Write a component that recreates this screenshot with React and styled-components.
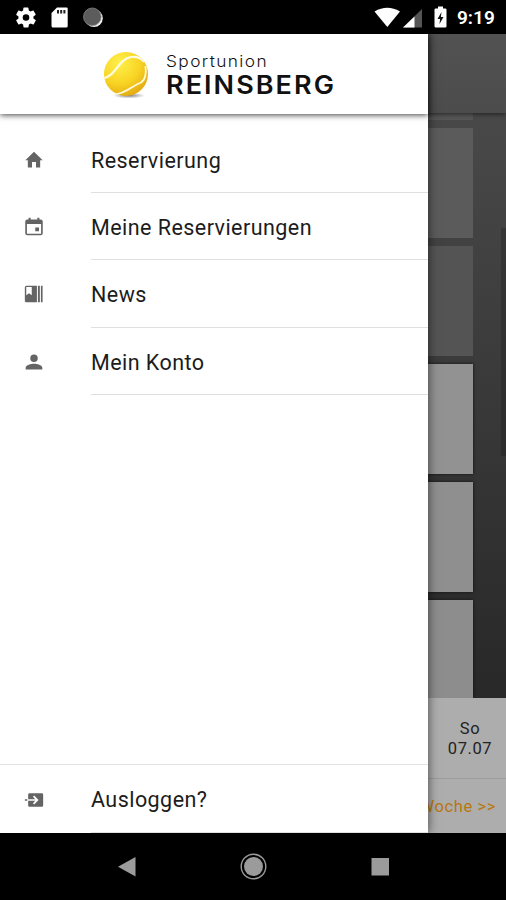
import React from 'react';
import styled, { createGlobalStyle } from 'styled-components';

const menu = [
  { label: 'Reservierung', icon: 'home' },
  { label: 'Meine Reservierungen', icon: 'event' },
  { label: 'News', icon: 'news' },
  { label: 'Mein Konto', icon: 'person' },
];

const icons = {
  home: 'M9.600 21v-6.500h4.800V21h5v-8.600h3L12 2 1.600 12.400h3V21z',
  event: 'M20 3h-1.500V1h-2.500v2H8V1H5.500v2H4a2.500 2.500 0 0 0-2.500 2.500v14A2.500 2.500 0 0 0 4 22h16a2.500 2.500 0 0 0 2.500-2.500v-14A2.500 2.500 0 0 0 20 3zm.5 17h-17V8.500h17zM13.500 12.500H18V17h-4.500z',
  news: 'M3 2h12.5v20H3a2 2 0 0 1-2-2V4a2 2 0 0 1 2-2zm-.3 1.500v10L6 11l3.300 2.500v-10zM16.700 2h2.300v20h-2.300zM20.300 2h2v20h-2z',
  person: 'M12 12a4.500 4.500 0 1 0 0-9 4.500 4.500 0 0 0 0 9zm0 2c-3.300 0-10 1.500-10 4.800V21h20v-2.200c0-3.300-6.700-4.800-10-4.800z',
  exit: 'M6.500 4h15a1.500 1.500 0 0 1 1.500 1.500v13a1.500 1.500 0 0 1-1.500 1.500h-15a1.500 1.500 0 0 1-1.500-1.500V13h8.500l-2.800 2.800 1.500 1.500L17.500 12l-5.300-5.300-1.500 1.500 2.800 2.800H5V5.500A1.500 1.500 0 0 1 6.500 4zM1 11.200h3v1.600H1z',
};

const MenuIcon = ({ name }) => (
  <Icon_svg viewBox="0 0 24 24">
    <path d={icons[name]} fillRule="evenodd" />
  </Icon_svg>
);

const StatusBar = () => (
  <Status_header>
    <svg width="110" height="34" viewBox="0 0 110 34">
      <g transform="translate(14 5.500)">
        <path
          fill="#fff"
          fillRule="evenodd"
          d="M19.400 13a7.500 7.500 0 0 0 0-2l2.100-1.600a.5.5 0 0 0 .1-.6l-2-3.500a.5.5 0 0 0-.6-.2l-2.500 1a7.300 7.300 0 0 0-1.700-1L14.400 2.400a.5.5 0 0 0-.5-.4h-4a.5.5 0 0 0-.5.400L9.100 5.100a7.700 7.700 0 0 0-1.700 1l-2.500-1a.5.5 0 0 0-.6.200l-2 3.500a.5.5 0 0 0 .1.600L4.500 11a7.900 7.900 0 0 0 0 2l-2.100 1.600a.5.5 0 0 0-.1.600l2 3.500c.1.200.4.300.6.200l2.500-1a7.300 7.300 0 0 0 1.700 1l.4 2.700c0 .2.200.4.5.4h4c.3 0 .5-.2.5-.4l.4-2.700a7.700 7.700 0 0 0 1.700-1l2.500 1c.2.100.5 0 .6-.2l2-3.500a.5.5 0 0 0-.1-.6zM12 15.300a3.300 3.300 0 1 1 0-6.600 3.300 3.300 0 0 1 0 6.600z"
        />
      </g>
      <path fill="#fff" d="M57 7.500h9.500q1.200 0 1.200 1.200v17.300q0 1.500-1.500 1.500H53q-1.500 0-1.500-1.500V13z" />
      <path fill="#222" d="M57 10h2v3.500h-2zM60.200 10h2v3.500h-2zM63.400 10h2v3.500h-2z" />
      <circle cx="94" cy="18.300" r="8.800" fill="#eee" />
      <circle cx="92.300" cy="16.800" r="8.800" fill="#5c5c5c" stroke="#858585" strokeWidth=".8" />
    </svg>
    <Status_right>
      <svg width="76" height="34" viewBox="0 0 76 34">
        <path fill="#fff" d="M2.500 11.500Q15.200 4 28 11.500L15.300 27z" />
        <path fill="#555" d="M50 9v18.500H31z" />
        <path fill="#fff" d="M42.500 16.500v11H31z" />
        <path fill="#fff" d="M66 6.500h5v2h2.200q1.300 0 1.300 1.300v16.400q0 1.300-1.300 1.300h-9.400q-1.300 0-1.300-1.300V9.800q0-1.300 1.300-1.300H66z" />
        <path fill="#111" d="m69.500 12-4 7h2.600l-.6 5 4-7h-2.600z" />
      </svg>
      <Clock_span>9:19</Clock_span>
    </Status_right>
  </Status_header>
);

const Ball = () => (
  <svg width="50" height="54" viewBox="0 0 50 54">
    <defs>
      <radialGradient id="felt" cx=".35" cy=".25" r=".85">
        <stop offset="0" stopColor="#fff04a" />
        <stop offset=".55" stopColor="#f8d424" />
        <stop offset="1" stopColor="#e0a20e" />
      </radialGradient>
      <radialGradient id="ground">
        <stop offset="0" stopColor="#000" stopOpacity=".5" />
        <stop offset="1" stopColor="#000" stopOpacity="0" />
      </radialGradient>
      <clipPath id="ball">
        <circle cx="24" cy="24" r="22" />
      </clipPath>
    </defs>
    <ellipse cx="27" cy="45.500" rx="16" ry="3" fill="url(#ground)" />
    <circle cx="24" cy="24" r="22" fill="url(#felt)" />
    <g clipPath="url(#ball)" fill="none" stroke="#fffbe0">
      <path strokeWidth="2.200" d="M0 28.500C14 27 16 9 29 7Q38 6 42 12" />
      <path strokeWidth="1.800" d="M12 44.500C24 44 31 35 39 32.500Q45 29 43.500 16" />
    </g>
  </svg>
);

const App = () => {
  return (
    <Screen_div>
      <GlobalStyle />
      <StatusBar />
      <Stage_main>
        <Page_section>
          <Page_header />
          <Board_div>
            <Slots_div>
              <Slot_div $height={7} $color="#565656" />
              <Slot_div $height={110} $color="#5b5b5b" />
              <Slot_div $height={110} $color="#545454" />
              <Slot_div $height={110} $color="#929292" $free />
              <Slot_div $height={110} $color="#8f8f8f" $free />
              <Slot_div $height={98} $color="#8d8d8d" $free />
            </Slots_div>
            <Scroll_div />
          </Board_div>
          <Day_div>
            <span>So</span>
            <span>07.07</span>
          </Day_div>
          <Week_div>Woche &gt;&gt;</Week_div>
        </Page_section>
        <Drawer_aside>
          <Drawer_header>
            <Ball />
            <Brand_div>
              <Club_span>Sportunion</Club_span>
              <Place_span>REINSBERG</Place_span>
            </Brand_div>
          </Drawer_header>
          <Menu_ul>
            {menu.map((item) => (
              <Item_li key={item.label}>
                <MenuIcon name={item.icon} />
                <Label_div>{item.label}</Label_div>
              </Item_li>
            ))}
          </Menu_ul>
          <Logout_div>
            <MenuIcon name="exit" />
            <Label_div>Ausloggen?</Label_div>
          </Logout_div>
        </Drawer_aside>
      </Stage_main>
      <Nav_footer>
        <svg width="506" height="67" viewBox="0 0 506 67">
          <g fill="#9b9b9b">
            <path d="M135.500 24v19.500L118 33.700z" />
            <circle cx="253.500" cy="33.500" r="9.500" />
            <circle cx="253.500" cy="33.500" r="12.300" fill="none" stroke="#9b9b9b" strokeWidth="1.400" />
            <path d="M371.500 25H389v17.500h-17.500z" />
          </g>
        </svg>
      </Nav_footer>
    </Screen_div>
  );
};

export default App;

const GlobalStyle = createGlobalStyle`
  * {
    box-sizing: border-box;
  }
  body {
    margin: 0;
    background: #000;
    font-family: Roboto, sans-serif;
  }
  svg {
    display: block;
    flex: none;
  }
`;
const Screen_div = styled.div`
  display: flex;
  flex-direction: column;
  width: 506px;
  height: 900px;
  overflow: hidden;
  background: #000;
`;
const Status_header = styled.header`
  display: flex;
  justify-content: space-between;
  height: 34px;
  flex: none;
`;
const Status_right = styled.div`
  display: flex;
  width: 134px;
`;
const Clock_span = styled.span`
  margin-left: 9px;
  color: #fff;
  font-size: 19px;
  font-weight: 600;
  line-height: 36px;
`;
const Stage_main = styled.main`
  position: relative;
  height: 799px;
  flex: none;
  overflow: hidden;
`;
const Page_section = styled.section`
  display: flex;
  flex-direction: column;
  height: 100%;
  background: #adadad;
`;
const Page_header = styled.header`
  height: 79px;
  flex: none;
  z-index: 1;
  background: linear-gradient(#525252, #4c4c4c);
  box-shadow: 0 1px 5px rgba(0, 0, 0, 0.6);
`;
const Board_div = styled.div`
  display: flex;
  justify-content: space-between;
  height: 585px;
  flex: none;
  overflow: hidden;
  background: linear-gradient(#494949, #282828);
`;
const Slots_div = styled.div`
  display: flex;
  flex-direction: column;
  gap: 8px;
  width: 473px;
`;
const Slot_div = styled.div`
  flex: none;
  height: ${(props) => props.$height}px;
  background: ${(props) => props.$color};
  box-shadow: ${(props) => (props.$free ? '0 0 3px #111' : 'none')};
`;
const Scroll_div = styled.div`
  width: 5px;
  height: 228px;
  margin-top: 115px;
  background: rgba(0, 0, 0, 0.18);
`;
const Day_div = styled.div`
  display: flex;
  flex-direction: column;
  align-items: center;
  height: 81px;
  padding: 21px 0 0 434px;
  border-bottom: 1px solid #9c9c9c;
  color: #222;
  font-size: 16.5px;
  line-height: 20px;
  letter-spacing: 0.6px;
`;
const Week_div = styled.div`
  padding: 17px 10px 0 0;
  color: #b9770e;
  font-size: 16.5px;
  line-height: 21px;
  letter-spacing: 0.6px;
  text-align: right;
`;
const Drawer_aside = styled.aside`
  position: absolute;
  top: 0;
  left: 0;
  z-index: 2;
  display: flex;
  flex-direction: column;
  width: 428px;
  height: 799px;
  background: #fff;
  box-shadow: 0 0 10px rgba(0, 0, 0, 0.6);
`;
const Drawer_header = styled.header`
  display: flex;
  height: 80px;
  flex: none;
  padding: 16px 0 0 102px;
  box-shadow: 0 1px 6px rgba(0, 0, 0, 0.75);
`;
const Brand_div = styled.div`
  display: flex;
  flex-direction: column;
  margin-left: 14px;
  color: #111;
  font-family: Inter, sans-serif;
  white-space: nowrap;
  transform: scaleX(1.08);
  transform-origin: left;
`;
const Club_span = styled.span`
  margin-top: 1px;
  font-size: 16px;
  font-weight: 300;
  line-height: 20px;
  letter-spacing: 1.3px;
`;
const Place_span = styled.span`
  font-size: 25px;
  font-weight: 600;
  line-height: 29px;
  letter-spacing: 1.9px;
`;
const Menu_ul = styled.ul`
  flex: 1;
  margin: 0;
  padding: 11.5px 0 0;
  list-style: none;
`;
const Item_li = styled.li`
  display: flex;
  align-items: center;
  height: 67.4px;
  padding-left: 24px;
`;
const Icon_svg = styled.svg`
  width: 20px;
  height: 20px;
  margin-top: 1px;
  fill: #646464;
`;
const Label_div = styled.div`
  flex: 1;
  align-self: stretch;
  margin-left: 47px;
  padding-top: 1px;
  border-bottom: 1.5px solid #e0e0e0;
  color: #1c1c1c;
  font-size: 21.5px;
  line-height: 68px;
  letter-spacing: 0.45px;
`;
const Logout_div = styled.div`
  display: flex;
  align-items: center;
  height: 69px;
  flex: none;
  padding-left: 24px;
  border-top: 1.5px solid #e2e2e2;
`;
const Nav_footer = styled.footer`
  height: 67px;
  flex: none;
  background: #000;
`;
